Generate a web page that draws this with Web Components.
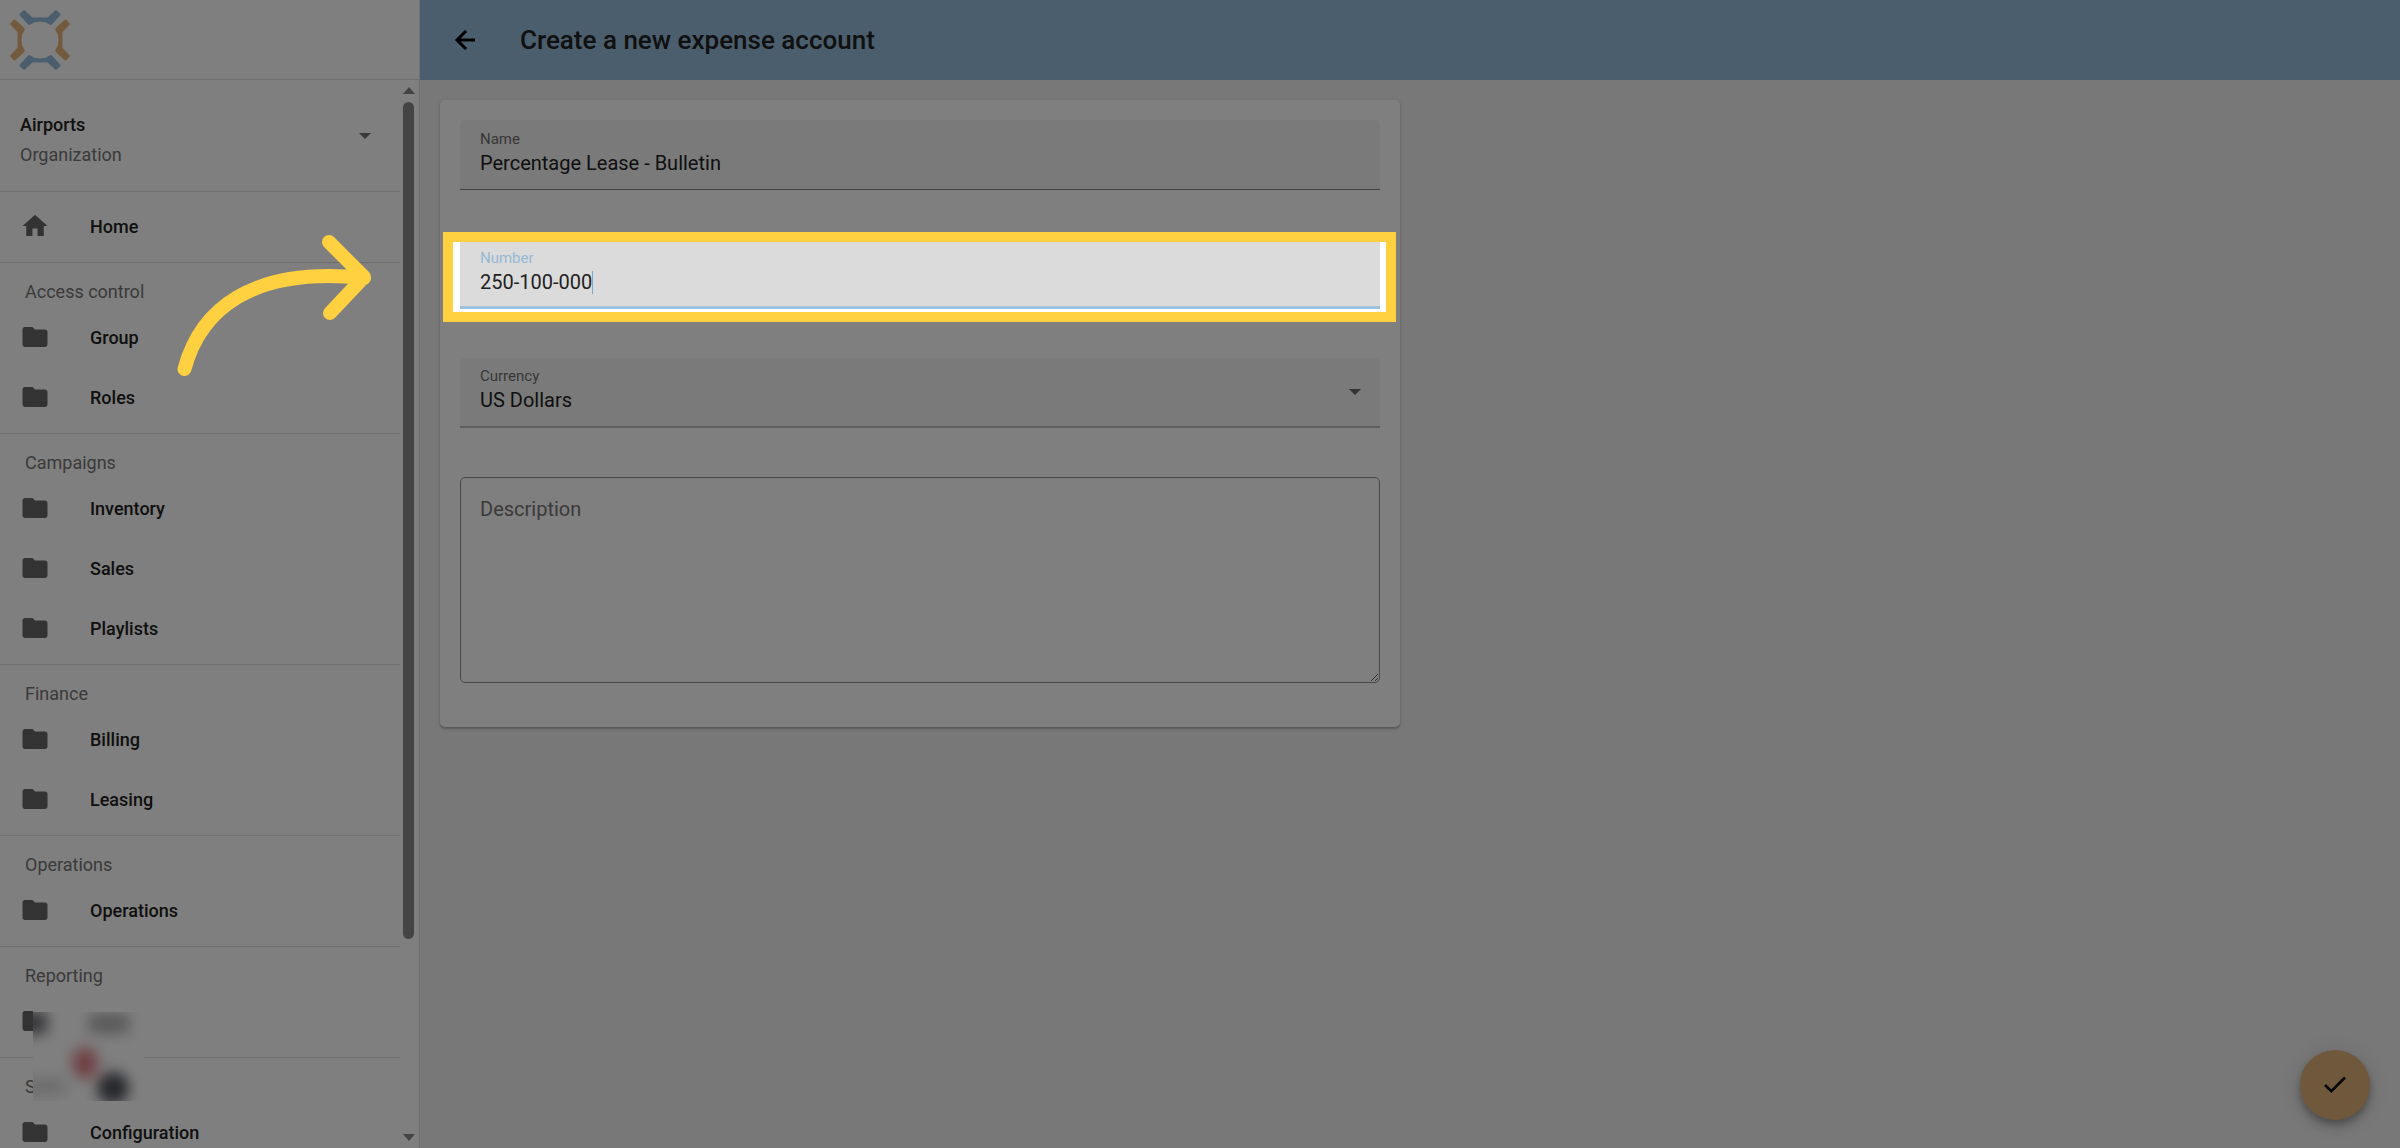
<!DOCTYPE html>
<html lang="en">
<head>
<meta charset="utf-8">
<meta name="viewport" content="width=device-width, initial-scale=1">
<title>Create a new expense account</title>
<style>
  body {
    margin: 0;
    font-family: Roboto, "Liberation Sans", sans-serif;
    color: #212121;
    background: #f0f0f0;
  }
</style>
</head>
<body>
<app-shell>
  <side-nav slot="nav">
    <nav-section>
      <nav-item icon="home">Home</nav-item>
    </nav-section>
    <nav-section heading="Access control">
      <nav-item>Group</nav-item>
      <nav-item>Roles</nav-item>
    </nav-section>
    <nav-section heading="Campaigns">
      <nav-item>Inventory</nav-item>
      <nav-item>Sales</nav-item>
      <nav-item>Playlists</nav-item>
    </nav-section>
    <nav-section heading="Finance">
      <nav-item>Billing</nav-item>
      <nav-item>Leasing</nav-item>
    </nav-section>
    <nav-section heading="Operations">
      <nav-item>Operations</nav-item>
    </nav-section>
    <nav-section heading="Reporting">
      <nav-item></nav-item>
    </nav-section>
    <nav-section heading="S">
      <nav-item>Configuration</nav-item>
    </nav-section>
  </side-nav>
  <top-bar slot="bar">Create a new expense account</top-bar>
  <form-card>
    <text-field label="Name" value="Percentage Lease - Bulletin"></text-field>
    <text-field label="Number" value="250-100-000" active></text-field>
    <select-field label="Currency" value="US Dollars"></select-field>
    <area-field label="Description"></area-field>
  </form-card>
</app-shell>
<save-button></save-button>
<guide-arrow></guide-arrow>

<script>
class AppShell extends HTMLElement {
  connectedCallback() {
    this.attachShadow({ mode: "open" });
    this.shadowRoot.innerHTML = `
      <style>
        :host {
          display: grid;
          grid-template-columns: 420px 1fr;
          height: 100vh;
          overflow: hidden;
        }

        .content {
          display: flex;
          flex-direction: column;
          min-width: 0;
        }

        main {
          flex: 1;
          padding: 20px;
        }
      </style>
      <slot name="nav"></slot>
      <div class="content">
        <slot name="bar"></slot>
        <main><slot></slot></main>
      </div>
    `;
  }
}

class SideNav extends HTMLElement {
  connectedCallback() {
    this.attachShadow({ mode: "open" });
    this.shadowRoot.innerHTML = `
      <style>
        :host {
          display: flex;
          flex-direction: column;
          box-sizing: border-box;
          height: 100vh;
          background: #fff;
          border-right: 1px solid #e0e0e0;
        }

        .logo {
          display: flex;
          align-items: center;
          box-sizing: border-box;
          height: 80px;
          flex: none;
          padding: 0 10px;
          border-bottom: 1px solid #dcdcdc;
        }

        .scroller {
          display: flex;
          flex: 1;
          min-height: 0;
        }

        .list {
          flex: 1;
          overflow: hidden;
        }

        .org {
          display: flex;
          align-items: center;
          justify-content: space-between;
          width: 100%;
          height: 111px;
          padding: 0 29px 0 20px;
          border: 0;
          background: none;
          font: inherit;
          font-size: 18px;
          color: inherit;
          text-align: left;
        }

        .org span {
          padding-top: 8px;
        }

        .org b {
          display: block;
          font-weight: 500;
          line-height: 30px;
        }

        .org small {
          display: block;
          font-size: 18px;
          line-height: 30px;
          color: #757575;
        }

        .track {
          display: flex;
          flex-direction: column;
          align-items: center;
          gap: 8px;
          width: 17px;
          padding: 7px 2px 7px 0;
        }

        .thumb {
          flex: 14;
          width: 11px;
          border-radius: 6px;
          background: #888;
        }

        .rest {
          flex: 3;
        }

        /* privacy patch over the account widget */
        .patch {
          position: absolute;
          left: 33px;
          bottom: 47px;
        }
      </style>
      <div class="logo">
        <svg width="60" height="60" viewBox="30 30 180 180" aria-label="Logo" stroke-width="7" stroke-linejoin="round">
          <defs>
            <path id="arm" d="M62 44L72 34L96 56H144L168 34L178 44L153 71A58 58 0 0 0 87 71Z"/>
          </defs>
          <use href="#arm" fill="#96bcda" stroke="#96bcda"/>
          <use href="#arm" fill="#96bcda" stroke="#96bcda" transform="rotate(180 120 120)"/>
          <use href="#arm" fill="#e8b47a" stroke="#e8b47a" transform="rotate(90 120 120)"/>
          <use href="#arm" fill="#e8b47a" stroke="#e8b47a" transform="rotate(270 120 120)"/>
        </svg>
      </div>
      <div class="scroller">
        <nav class="list">
          <button class="org" type="button">
            <span><b>Airports</b><small>Organization</small></span>
            <svg width="12" height="6" viewBox="0 0 12 6"><path d="M0 0h12L6 6z" fill="#757575"/></svg>
          </button>
          <slot></slot>
        </nav>
        <div class="track">
          <svg width="12" height="7" viewBox="0 0 12 7"><path d="M0 7h12L6 0z" fill="#888"/></svg>
          <div class="thumb"></div>
          <div class="rest"></div>
          <svg width="12" height="7" viewBox="0 0 12 7"><path d="M0 0h12L6 7z" fill="#888"/></svg>
        </div>
      </div>
      <svg class="patch" width="111" height="89" viewBox="0 0 111 89">
        <defs>
          <filter id="soft" x="-100%" y="-100%" width="300%" height="300%"><feGaussianBlur stdDeviation="7"/></filter>
        </defs>
        <rect width="111" height="89" fill="#fff"/>
        <g filter="url(#soft)">
          <rect x="-14" y="0" width="28" height="22" fill="#6a6c70"/>
          <rect x="56" y="2" width="40" height="19" fill="#b0b0b0"/>
          <rect x="-10" y="66" width="42" height="18" fill="#dcdcdc"/>
          <ellipse cx="52" cy="51" rx="13" ry="16" fill="#e08088"/>
          <circle cx="80" cy="76" r="16" fill="#4c4e58"/>
        </g>
      </svg>
    `;
  }
}

class NavSection extends HTMLElement {
  connectedCallback() {
    const heading = this.getAttribute("heading");
    this.attachShadow({ mode: "open" });
    this.shadowRoot.innerHTML = `
      <style>
        :host {
          display: block;
          padding: 4px 0 6px;
          border-top: 1px solid #dcdcdc;
        }

        h2 {
          margin: 0;
          padding: 10px 25px 0;
          font-size: 18px;
          font-weight: 400;
          line-height: 30px;
          color: #757575;
        }
      </style>
      ${heading ? `<h2>${heading}</h2>` : ""}
      <slot></slot>
    `;
  }
}

const ICONS = {
  home: "M10 20v-6h4v6h5v-8h3L12 3 2 12h3v8z",
  folder: "M10 4H4c-1.100 0-1.990.9-1.990 2L2 18c0 1.100.9 2 2 2h16c1.100 0 2-.9 2-2V8c0-1.100-.9-2-2-2h-8l-2-2z"
};

class NavItem extends HTMLElement {
  connectedCallback() {
    const icon = ICONS[this.getAttribute("icon") || "folder"];
    this.attachShadow({ mode: "open" });
    this.shadowRoot.innerHTML = `
      <style>
        :host {
          display: block;
        }

        a {
          display: flex;
          align-items: center;
          gap: 40px;
          height: 60px;
          padding: 0 20px;
          font-size: 18px;
          font-weight: 500;
          color: inherit;
          text-decoration: none;
        }

        svg {
          flex: none;
          fill: #666;
        }
      </style>
      <a href="#"><svg width="30" height="30" viewBox="0 0 24 24"><path d="${icon}"/></svg><slot></slot></a>
    `;
  }
}

class TopBar extends HTMLElement {
  connectedCallback() {
    this.attachShadow({ mode: "open" });
    this.shadowRoot.innerHTML = `
      <style>
        :host {
          display: flex;
          align-items: center;
          gap: 40px;
          height: 80px;
          padding: 0 30px;
          background: #96bcda;
        }

        button {
          display: flex;
          padding: 0;
          border: 0;
          background: none;
        }

        h1 {
          margin: 0;
          font-size: 26px;
          font-weight: 500;
        }
      </style>
      <button type="button" aria-label="Back">
        <svg width="30" height="30" viewBox="0 0 30 30" fill="none" stroke="#000" stroke-width="3"><path d="M25 15H7M16 6l-9 9 9 9"/></svg>
      </button>
      <h1><slot></slot></h1>
    `;
  }
}

class FormCard extends HTMLElement {
  connectedCallback() {
    this.attachShadow({ mode: "open" });
    this.shadowRoot.innerHTML = `
      <style>
        :host {
          display: block;
        }

        form {
          display: flex;
          flex-direction: column;
          gap: 49px;
          box-sizing: border-box;
          max-width: 960px;
          padding: 20px 20px 44px;
          border-radius: 5px;
          background: #fff;
          box-shadow: 0 2px 2px rgba(0, 0, 0, 0.2), 0 1px 4px rgba(0, 0, 0, 0.12);
        }
      </style>
      <form><slot></slot></form>
    `;
  }
}

const FIELD_STYLE = `
  :host {
    display: block;
    position: relative;
  }

  .box {
    display: flex;
    flex-direction: column;
    box-sizing: border-box;
    height: 70px;
    padding: 9px 20px 0;
    border-bottom: 1px solid #848484;
    border-radius: 5px 5px 0 0;
    background: #f5f5f5;
  }

  label {
    font-size: 15px;
    line-height: 20px;
    color: #6f6f6f;
  }

  .row {
    display: flex;
    align-items: center;
    height: 28px;
  }

  input,
  select {
    flex: 1;
    min-width: 0;
    height: 28px;
    margin: 0;
    padding: 0;
    border: 0;
    outline: 0;
    background: none;
    font: inherit;
    font-size: 20px;
    color: inherit;
  }
`;

class TextField extends HTMLElement {
  connectedCallback() {
    const active = this.hasAttribute("active");
    this.attachShadow({ mode: "open" });
    this.shadowRoot.innerHTML = `
      <style>
        ${FIELD_STYLE}

        :host([active]) .box {
          border-bottom: 3px solid #9fc2dd;
          border-radius: 0;
          background: #dbdbdb;
        }

        :host([active]) label {
          color: #96b9d4;
        }

        :host([active]) input {
          flex: none;
          field-sizing: content;
        }

        .caret {
          width: 1px;
          height: 23px;
          background: #7ea6c8;
        }

        /* the wide shadow dims everything outside the ring */
        .ring {
          position: absolute;
          z-index: 10;
          inset: -7px -16px -13px -17px;
          border: 10px solid #ffd140;
          box-shadow: 0 0 0 4000px rgba(0, 0, 0, 0.5);
          pointer-events: none;
        }
      </style>
      <div class="box">
        <label for="field">${this.getAttribute("label")}</label>
        <div class="row">
          <input id="field" type="text" value="${this.getAttribute("value")}">
          ${active ? `<span class="caret"></span>` : ""}
        </div>
      </div>
      ${active ? `<div class="ring"></div>` : ""}
    `;
  }
}

class SelectField extends HTMLElement {
  connectedCallback() {
    this.attachShadow({ mode: "open" });
    this.shadowRoot.innerHTML = `
      <style>
        ${FIELD_STYLE}

        .box {
          flex-direction: row;
          align-items: center;
          padding-top: 0;
          padding-right: 19px;
          border-bottom: 2px solid #bcbcbc;
        }

        .text {
          display: flex;
          flex: 1;
          flex-direction: column;
          padding-bottom: 5px;
        }

        select {
          flex: none;
          appearance: none;
        }
      </style>
      <div class="box">
        <div class="text">
          <label for="field">${this.getAttribute("label")}</label>
          <select id="field"><option>${this.getAttribute("value")}</option></select>
        </div>
        <svg width="12" height="6" viewBox="0 0 12 6"><path d="M0 0h12L6 6z" fill="#666"/></svg>
      </div>
    `;
  }
}

class AreaField extends HTMLElement {
  connectedCallback() {
    this.attachShadow({ mode: "open" });
    this.shadowRoot.innerHTML = `
      <style>
        :host {
          display: block;
          position: relative;
        }

        label {
          position: absolute;
          left: 20px;
          top: 18px;
          font-size: 20px;
          line-height: 28px;
          color: #757575;
        }

        textarea {
          display: block;
          box-sizing: border-box;
          width: 100%;
          height: 206px;
          padding: 20px;
          border: 1px solid #909090;
          border-radius: 5px;
          outline: 0;
          background: none;
          font: inherit;
          font-size: 20px;
          color: inherit;
          resize: vertical;
        }
      </style>
      <label for="field">${this.getAttribute("label")}</label>
      <textarea id="field"></textarea>
    `;
  }
}

class SaveButton extends HTMLElement {
  connectedCallback() {
    this.attachShadow({ mode: "open" });
    this.shadowRoot.innerHTML = `
      <style>
        :host {
          display: block;
          position: fixed;
          right: 30px;
          bottom: 28px;
        }

        button {
          display: grid;
          place-items: center;
          width: 70px;
          height: 70px;
          padding: 0;
          border: 0;
          border-radius: 50%;
          background: #deb078;
          box-shadow: 0 4px 6px rgba(0, 0, 0, 0.2), 0 8px 12px rgba(0, 0, 0, 0.14), 0 2px 22px rgba(0, 0, 0, 0.12);
        }
      </style>
      <button type="button" aria-label="Save">
        <svg width="30" height="30" viewBox="0 0 24 24" fill="none" stroke="#000" stroke-width="2"><path d="M4 12l5 5L20 6"/></svg>
      </button>
    `;
  }
}

class GuideArrow extends HTMLElement {
  connectedCallback() {
    this.attachShadow({ mode: "open" });
    this.shadowRoot.innerHTML = `
      <style>
        :host {
          display: block;
          position: absolute;
          z-index: 20;
          left: 170px;
          top: 230px;
          pointer-events: none;
        }

        svg {
          display: block;
        }
      </style>
      <svg width="210" height="150" viewBox="170 230 210 150" fill="none" stroke="#ffd140" stroke-width="14" stroke-linecap="round" stroke-linejoin="round">
        <path d="M184.500 369C200 311 250 266 364 278M329 242l35 35-34 36"/>
      </svg>
    `;
  }
}

customElements.define("app-shell", AppShell);
customElements.define("side-nav", SideNav);
customElements.define("nav-section", NavSection);
customElements.define("nav-item", NavItem);
customElements.define("top-bar", TopBar);
customElements.define("form-card", FormCard);
customElements.define("text-field", TextField);
customElements.define("select-field", SelectField);
customElements.define("area-field", AreaField);
customElements.define("save-button", SaveButton);
customElements.define("guide-arrow", GuideArrow);
</script>
</body>
</html>
